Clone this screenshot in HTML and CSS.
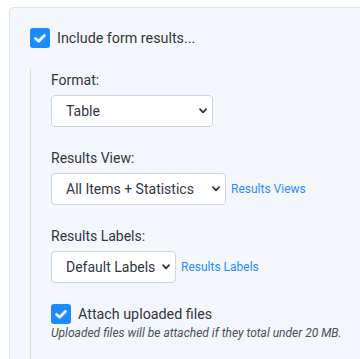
FILE: index.html
```html
<!DOCTYPE html>
<html>
<head>
<meta charset="utf-8">
<link rel="stylesheet" href="styles.css">
</head>
<body>
<div class="card">
  <label class="check-row">
    <span class="check"><svg viewBox="0 0 20 20" width="20" height="20"><rect width="20" height="20" rx="3" fill="#1a8cff"/><path d="M5.6 10.4 L8.6 13.2 L14.4 7.4" fill="none" stroke="#fff" stroke-width="2.8" stroke-linecap="round" stroke-linejoin="round"/></svg></span>
    <span class="check-label">Include form results...</span>
  </label>
  <div class="sub">
    <div class="group">
      <div class="label">Format:</div>
      <div class="row">
        <select class="select select-format"><option>Table</option></select>
      </div>
    </div>
    <div class="group">
      <div class="label">Results View:</div>
      <div class="row">
        <select class="select select-view"><option>All Items + Statistics</option></select>
        <a class="link" href="#">Results Views</a>
      </div>
    </div>
    <div class="group">
      <div class="label">Results Labels:</div>
      <div class="row">
        <select class="select"><option>Default Labels</option></select>
        <a class="link" href="#">Results Labels</a>
      </div>
    </div>
    <label class="check-row">
      <span class="check"><svg viewBox="0 0 20 20" width="20" height="20"><rect width="20" height="20" rx="3" fill="#1a8cff"/><path d="M5.6 10.4 L8.6 13.2 L14.4 7.4" fill="none" stroke="#fff" stroke-width="2.8" stroke-linecap="round" stroke-linejoin="round"/></svg></span>
      <span class="check-label">Attach uploaded files</span>
    </label>
    <div class="help">Uploaded files will be attached if they total under 20 MB.</div>
  </div>
</div>
</body>
</html>
```

FILE: styles.css
```css
html, body {
  margin: 0;
  padding: 0;
  background: #ffffff;
  overflow: hidden;
}
body {
  font-family: Roboto, "Liberation Sans", sans-serif;
  color: #303644;
  width: 360px;
  height: 359px;
}
.card {
  margin: 7px 0 0 9px;
  width: 351px;
  height: 352px;
  background: #f3f6fa;
  border-top: 1px solid #dde4ec;
  border-left: 1px solid #dde4ec;
  border-radius: 5px 0 0 0;
  padding: 20px 0 0 20px;
  box-sizing: border-box;
  overflow: hidden;
}
.check-row {
  display: flex;
  align-items: center;
  gap: 7px;
  height: 20px;
}
.check {
  width: 20px;
  height: 20px;
  display: block;
}
.check svg { display: block; }
.check-label {
  font-size: 14.3px;
  line-height: 20px;
}
.sub {
  margin-top: 21px;
  border-left: 1px solid #d3dce6;
  padding: 1px 0 0 20px;
  height: 300px;
}
.group {
  margin-bottom: 21px;
}
.label {
  font-size: 14px;
  line-height: 20px;
  margin-bottom: 5px;
}
.row {
  display: flex;
  align-items: center;
  gap: 5px;
}
.select {
  -webkit-appearance: none;
  appearance: none;
  height: 32px;
  box-sizing: border-box;
  border: 1px solid #ccd6e1;
  border-radius: 4px;
  background: #fff url("data:image/svg+xml,%3Csvg xmlns='http://www.w3.org/2000/svg' width='8' height='6' viewBox='0 0 8 6'%3E%3Cpath d='M1 1.2 L4 4.3 L7 1.2' fill='none' stroke='%23333' stroke-width='1.8' stroke-linecap='round' stroke-linejoin='round'/%3E%3C/svg%3E") no-repeat right 5px center;
  padding: 0 19px 0 14px;
  font-family: Roboto, "Liberation Sans", sans-serif;
  font-size: 14px;
  color: #303644;
  outline: none;
}
.select-format {
  width: 162px;
}
.select-view {
  width: 175px;
}
.link {
  font-size: 12px;
  color: #2b8cff;
  text-decoration: none;
}
.sub > .check-row {
  margin-top: 20px;
}
.help {
  font-size: 12px;
  font-style: italic;
  line-height: 16px;
  margin-top: 1px;
  color: #4a505a;
}
```
